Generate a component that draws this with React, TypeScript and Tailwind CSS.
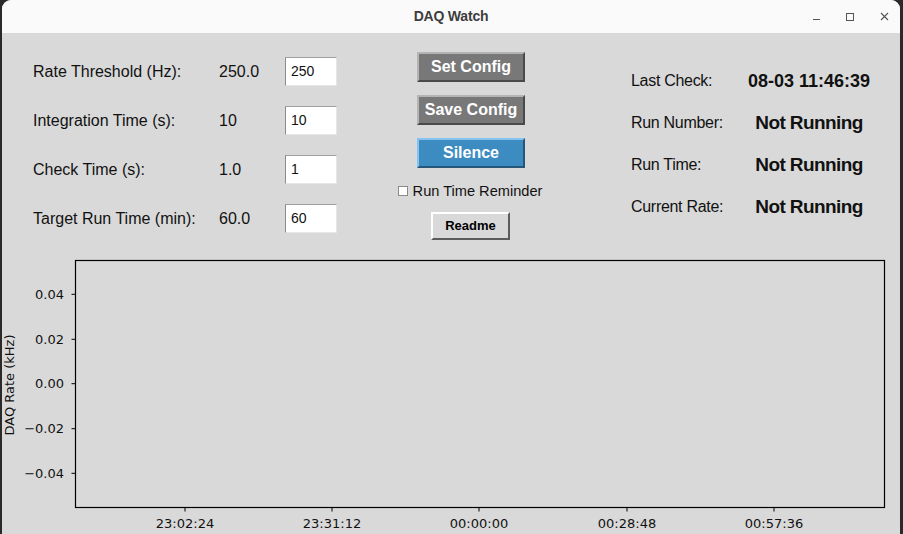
import React from "react";

const SANS = "font-['Liberation_Sans',Arial,sans-serif]";

const SETTINGS = [
  { label: "Rate Threshold (Hz):", value: "250.0", input: "250" },
  { label: "Integration Time (s):", value: "10", input: "10" },
  { label: "Check Time (s):", value: "1.0", input: "1" },
  { label: "Target Run Time (min):", value: "60.0", input: "60" },
];

const STATUS = [
  { label: "Last Check:", value: "08-03 11:46:39", small: true },
  { label: "Run Number:", value: "Not Running" },
  { label: "Run Time:", value: "Not Running" },
  { label: "Current Rate:", value: "Not Running" },
];

const Y_TICKS = [
  { y: 44.3, label: "0.04" },
  { y: 89.3, label: "0.02" },
  { y: 133.7, label: "0.00" },
  { y: 178.7, label: "\u22120.02" },
  { y: 223.3, label: "\u22120.04" },
];

const X_TICKS = [
  { x: 183, label: "23:02:24" },
  { x: 330, label: "23:31:12" },
  { x: 477, label: "00:00:00" },
  { x: 625, label: "00:28:48" },
  { x: 772, label: "00:57:36" },
];

function TitleBar() {
  return (
    <div className="relative h-[33px] bg-[#fafafa] flex items-center justify-center shrink-0">
      <span className={`${SANS} text-[14px] font-bold text-[#3d3d3d] tracking-[-0.2px]`}>DAQ Watch</span>
      {/* window controls */}
      <div className="absolute right-[-1px] top-0 h-[33px] flex items-center">
        <div className="w-[34px] h-full flex items-center justify-center">
          <div className="w-[7px] h-[1px] bg-[#555] mt-[5px]" />
        </div>
        <div className="w-[34px] h-full flex items-center justify-center">
          <div className="w-[8px] h-[8px] border border-[#555]" />
        </div>
        <div className="w-[34px] h-full flex items-center justify-center">
          <svg width="9" height="9" viewBox="0 0 9 9">
            <path d="M1 1 L8 8 M8 1 L1 8" stroke="#555" strokeWidth="1.1" />
          </svg>
        </div>
      </div>
    </div>
  );
}

function TkButton({ label, blue }: { label: string; blue?: boolean }) {
  return (
    <div
      className={`w-[108px] h-[30px] flex items-center justify-center border-2 ${SANS} text-[16px] font-bold text-white ${
        blue
          ? "bg-[#3d8cc1] border-t-[#85c3f0] border-l-[#85c3f0] border-r-[#24577a] border-b-[#24577a]"
          : "bg-[#787878] border-t-[#b4b4b4] border-l-[#b4b4b4] border-r-[#4a4a4a] border-b-[#4a4a4a]"
      }`}
    >
      {label}
    </div>
  );
}

function Chart() {
  const font = "DejaVu Sans, sans-serif";
  return (
    <svg width="898" height="284" className="block">
      <rect x="73.5" y="10.5" width="809" height="247" fill="none" stroke="#000" strokeWidth="1.2" />
      {Y_TICKS.map((t) => (
        <g key={t.label}>
          <line x1="69.5" x2="73.5" y1={t.y} y2={t.y} stroke="#000" strokeWidth="1" />
          <text x="62" y={t.y} textAnchor="end" dominantBaseline="central" fontFamily={font} fontSize="13" fill="#111">
            {t.label}
          </text>
        </g>
      ))}
      {X_TICKS.map((t) => (
        <g key={t.label}>
          <line x1={t.x} x2={t.x} y1="257.5" y2="261.5" stroke="#000" strokeWidth="1" />
          <text x={t.x} y="273" textAnchor="middle" dominantBaseline="central" fontFamily={font} fontSize="13" fill="#111">
            {t.label}
          </text>
        </g>
      ))}
      <text
        x="7.5"
        y="135"
        textAnchor="middle"
        dominantBaseline="central"
        fontFamily={font}
        fontSize="13"
        fill="#111"
        transform="rotate(-90 7.5 135)"
      >
        DAQ Rate (kHz)
      </text>
    </svg>
  );
}

export default function App() {
  return (
    <div className="w-[903px] h-[534px] bg-[#2a2a2a] overflow-hidden">
      <div className="ml-[2px] mr-[3px] h-full rounded-t-[9px] overflow-hidden flex flex-col bg-[#d9d9d9]">
        <TitleBar />

        <div className={`h-[217px] flex ${SANS} text-[#111]`}>
          {/* settings */}
          <div className="pl-[31px] pt-[14px] flex flex-col">
            {SETTINGS.map((s) => (
              <div key={s.label} className="h-[49px] flex items-center">
                <span className="w-[186px] text-[16px]">{s.label}</span>
                <span className="w-[66px] text-[16px]">{s.value}</span>
                <div className="w-[52px] h-[29px] bg-white border border-t-[#a0a0a0] border-l-[#8c8c8c] border-r-[#e6e6e6] border-b-[#e6e6e6] flex items-center pl-[5px] text-[14px]">
                  {s.input}
                </div>
              </div>
            ))}
          </div>

          {/* buttons */}
          <div className="ml-[80px] pt-[19px] w-[108px] flex flex-col items-center">
            <div className="flex flex-col gap-[13px]">
              <TkButton label="Set Config" />
              <TkButton label="Save Config" />
              <TkButton label="Silence" blue />
            </div>
            <div className="mt-[16px] flex items-center whitespace-nowrap ml-[-2px]">
              <div className="w-[10px] h-[10px] bg-white border border-[#8a8a8a]" />
              <span className="ml-[5px] text-[14.6px] leading-none">Run Time Reminder</span>
            </div>
            <div className="mt-[13px] ml-[-1px] w-[79px] h-[28px] bg-[#d9d9d9] border-2 border-t-white border-l-white border-r-[#5c5c5c] border-b-[#5c5c5c] flex items-center justify-center text-[13px] font-bold text-black">
              Readme
            </div>
          </div>

          {/* status */}
          <div className="ml-[106px] pt-[27px] flex flex-col">
            {STATUS.map((s) => (
              <div key={s.label} className="h-[42px] flex items-center">
                <span className="w-[111px] text-[16px] tracking-[-0.3px]">{s.label}</span>
                <span
                  className={`w-[134px] text-center font-bold ${
                    s.small ? "text-[18px]" : "text-[19px] tracking-[-0.6px]"
                  }`}
                >
                  {s.value}
                </span>
              </div>
            ))}
          </div>
        </div>

        <Chart />
      </div>
    </div>
  );
}
